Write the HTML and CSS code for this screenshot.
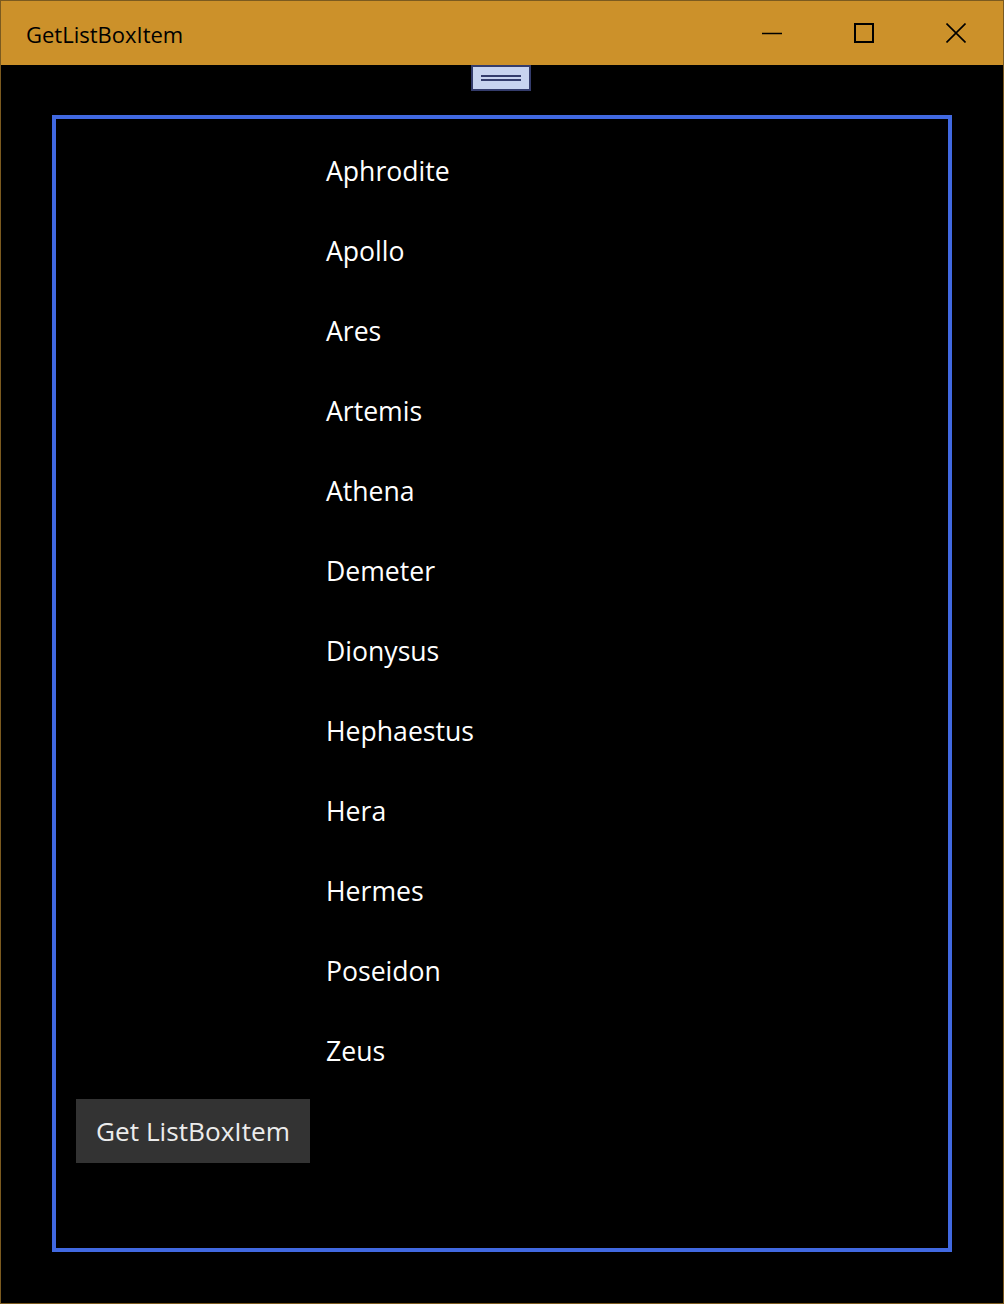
FILE: index.html
```html
<!DOCTYPE html>
<html>
<head>
<meta charset="utf-8">
<link rel="stylesheet" href="styles.css">
</head>
<body>
<div class="window">
  <div class="titlebar">
    <span class="title">GetListBoxItem</span>
    <div class="controls">
      <span class="ctl">
        <svg width="20" height="20" viewBox="0 0 20 20"><line x1="0" y1="10.5" x2="20" y2="10.5" stroke="#000" stroke-width="1.5"/></svg>
      </span>
      <span class="ctl">
        <svg width="20" height="20" viewBox="0 0 20 20"><rect x="1" y="1" width="18" height="18" fill="none" stroke="#000" stroke-width="2"/></svg>
      </span>
      <span class="ctl">
        <svg width="20" height="20" viewBox="0 0 20 20"><path d="M0.5 0.5 L19.5 19.5 M19.5 0.5 L0.5 19.5" stroke="#000" stroke-width="1.6" fill="none"/></svg>
      </span>
    </div>
  </div>
  <div class="content">
    <div class="grip"><span class="grip-line"></span><span class="grip-line"></span></div>
    <div class="panel">
      <ul class="list">
        <li class="item">Aphrodite</li>
        <li class="item">Apollo</li>
        <li class="item">Ares</li>
        <li class="item">Artemis</li>
        <li class="item">Athena</li>
        <li class="item">Demeter</li>
        <li class="item">Dionysus</li>
        <li class="item">Hephaestus</li>
        <li class="item">Hera</li>
        <li class="item">Hermes</li>
        <li class="item">Poseidon</li>
        <li class="item">Zeus</li>
      </ul>
      <button class="btn">Get ListBoxItem</button>
    </div>
  </div>
</div>
</body>
</html>
```
FILE: styles.css
```css
html, body {
  margin: 0;
  padding: 0;
  background: #000;
}
.window {
  width: 1002px;
  height: 1302px;
  border: 1px solid #7b5a1f;
  display: flex;
  flex-direction: column;
  font-family: "Open Sans", "Noto Sans", sans-serif;
}
.titlebar {
  height: 64px;
  flex: none;
  background: #cc912a;
  display: flex;
  align-items: center;
  justify-content: space-between;
}
.title {
  margin-left: 25px;
  font-size: 22px;
  color: #000;
  position: relative;
  top: 1px;
}
.controls {
  display: flex;
  margin-right: 37px;
  gap: 72px;
}
.ctl {
  width: 20px;
  height: 20px;
  display: block;
}
.ctl svg { display: block; }
.content {
  flex: 1;
  position: relative;
  padding: 50px 51px 51px 51px;
}
.grip {
  position: absolute;
  left: 470px;
  top: 0;
  width: 56px;
  height: 22px;
  background: #c8d3ef;
  border: 2px solid #343c6c;
  display: flex;
  flex-direction: column;
  align-items: center;
  justify-content: center;
  gap: 2px;
}
.grip-line {
  width: 40px;
  height: 2px;
  background: #343c6c;
}
.panel {
  height: 1129px;
  border: 4px solid #4169e1;
  display: flex;
  flex-direction: column;
}
.list {
  list-style: none;
  margin: 12px 0 0 0;
  padding: 0 0 0 270px;
}
.item {
  height: 80px;
  display: flex;
  align-items: center;
  color: #fff;
  font-size: 26.6px;
}
.btn {
  margin: 8px 0 0 20px;
  align-self: flex-start;
  width: 234px;
  height: 64px;
  background: #333;
  border: none;
  color: #ececec;
  font-family: "Open Sans", "Noto Sans", sans-serif;
  font-size: 26.2px;
  padding: 0 0 0 20px;
  text-align: left;
}
```
